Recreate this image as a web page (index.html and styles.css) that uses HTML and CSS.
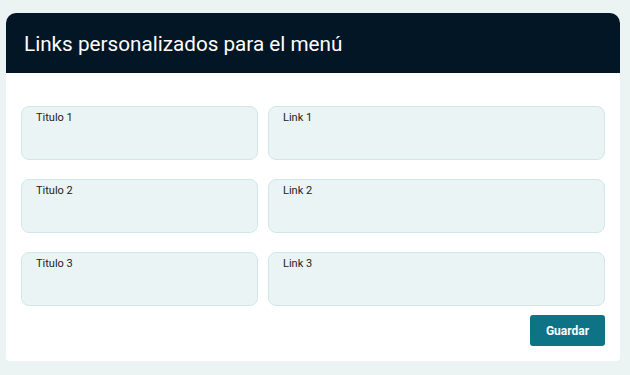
FILE: index.html
```html
<!DOCTYPE html>
<html lang="es">
<head>
    <meta charset="UTF-8">
    <meta name="viewport" content="width=device-width, initial-scale=1.0">
    <title>Links personalizados</title>
    <link rel="stylesheet" href="styles.css">
</head>
<body>
    <div class="card">
        <div class="card-header">
            <h1>Links personalizados para el menú</h1>
        </div>
        <form class="card-body">
            <div class="fields">
                <textarea class="field" placeholder="Titulo 1"></textarea>
                <textarea class="field" placeholder="Link 1"></textarea>
                <textarea class="field" placeholder="Titulo 2"></textarea>
                <textarea class="field" placeholder="Link 2"></textarea>
                <textarea class="field" placeholder="Titulo 3"></textarea>
                <textarea class="field" placeholder="Link 3"></textarea>
            </div>
            <div class="actions">
                <button type="button" class="btn">Guardar</button>
            </div>
        </form>
    </div>
</body>
</html>
```

FILE: styles.css
```css
body {
    font-family: Roboto, 'Liberation Sans', sans-serif;
    background: #ecf4f3;
    margin: 0;
    padding: 13px 10px 0 6px;
}
.card {
    background: #fff;
    border-radius: 10px 10px 4px 4px;
    overflow: hidden;
}
.card-header {
    background: #021626;
    height: 60px;
    display: flex;
    align-items: center;
    padding: 0 18px;
}
.card-header h1 {
    margin: 0;
    color: #fff;
    font-size: 20.7px;
    font-weight: 400;
    padding-top: 1px;
}
.card-body {
    padding: 33px 15px 15px 15px;
}
.fields {
    display: grid;
    grid-template-columns: 237px 1fr;
    column-gap: 10px;
    row-gap: 19px;
}
.field {
    display: block;
    box-sizing: border-box;
    width: 100%;
    height: 54px;
    margin: 0;
    resize: none;
    background: #ebf4f4;
    border: 1px solid #d1e6e6;
    border-radius: 8px;
    padding: 4px 14px;
    font-family: Roboto, 'Liberation Sans', sans-serif;
    font-size: 11px;
    color: #222;
    outline: none;
}
.field::placeholder {
    color: #222;
    opacity: 1;
}
.actions {
    display: flex;
    justify-content: flex-end;
    margin-top: 9px;
}
.btn {
    width: 75px;
    height: 31px;
    background: #0e7385;
    color: #fff;
    border: none;
    border-radius: 3px;
    font-family: Roboto, 'Liberation Sans', sans-serif;
    font-size: 12px;
    font-weight: 700;
    cursor: pointer;
}
```
